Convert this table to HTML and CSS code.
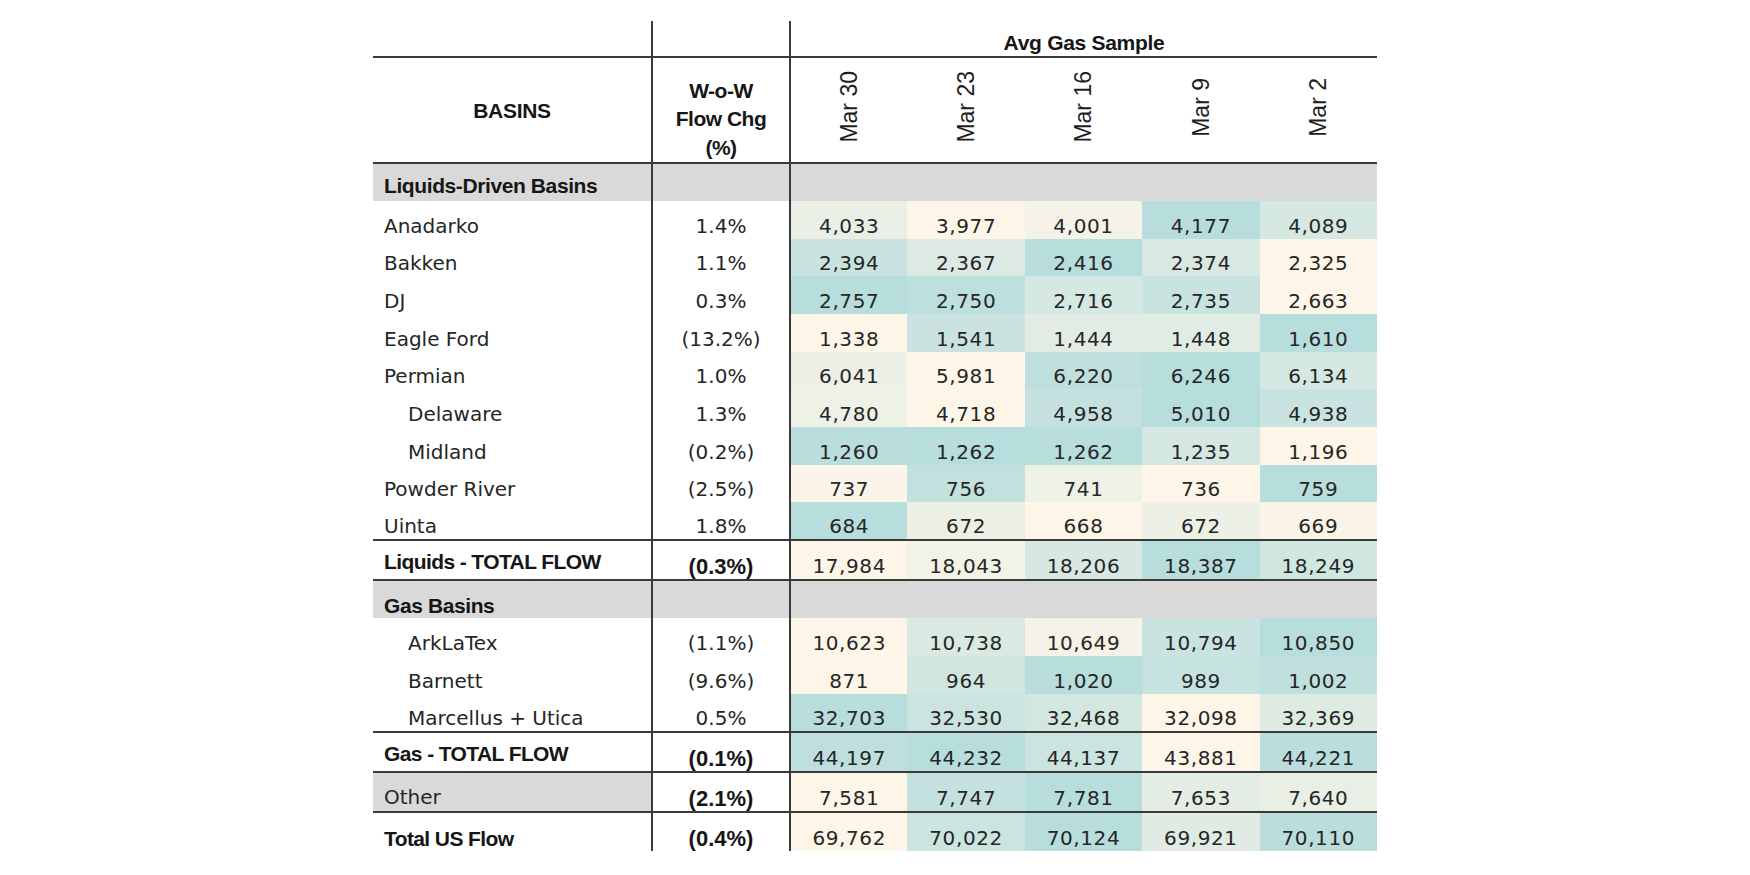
FILE: index.html
```html
<!DOCTYPE html>
<html>
<head>
<meta charset="utf-8">
<title>Avg Gas Sample by Basin</title>
<link rel="stylesheet" href="styles.css">
</head>
<body>
<table class="flow">
  <colgroup>
    <col class="c-name"><col class="c-chg"><col class="c-val"><col class="c-val"><col class="c-val"><col class="c-val"><col class="c-val">
  </colgroup>
  <thead>
    <tr class="r-super rule">
      <th class="name"></th>
      <th class="chg"></th>
      <th class="super" colspan="5">Avg Gas Sample</th>
    </tr>
    <tr class="r-head rule">
      <th class="name head-basins">BASINS</th>
      <th class="chg head-chg">W-o-W<br>Flow Chg<br>(%)</th>
      <th class="date"><span>Mar 30</span></th>
      <th class="date"><span>Mar 23</span></th>
      <th class="date"><span>Mar 16</span></th>
      <th class="date"><span>Mar 9</span></th>
      <th class="date"><span>Mar 2</span></th>
    </tr>
  </thead>
  <tbody>
    <tr class="r-section">
      <td class="name section sec-liq">Liquids-Driven Basins</td>
      <td class="chg"></td>
      <td colspan="5"></td>
    </tr>
    <tr class="r-data heat"><td class="name">Anadarko</td><td class="chg">1.4%</td><td class="v">4,033</td><td class="v">3,977</td><td class="v">4,001</td><td class="v">4,177</td><td class="v">4,089</td></tr>
    <tr class="r-data heat"><td class="name">Bakken</td><td class="chg">1.1%</td><td class="v">2,394</td><td class="v">2,367</td><td class="v">2,416</td><td class="v">2,374</td><td class="v">2,325</td></tr>
    <tr class="r-data heat"><td class="name">DJ</td><td class="chg">0.3%</td><td class="v">2,757</td><td class="v">2,750</td><td class="v">2,716</td><td class="v">2,735</td><td class="v">2,663</td></tr>
    <tr class="r-data heat"><td class="name">Eagle Ford</td><td class="chg">(13.2%)</td><td class="v">1,338</td><td class="v">1,541</td><td class="v">1,444</td><td class="v">1,448</td><td class="v">1,610</td></tr>
    <tr class="r-data heat"><td class="name">Permian</td><td class="chg">1.0%</td><td class="v">6,041</td><td class="v">5,981</td><td class="v">6,220</td><td class="v">6,246</td><td class="v">6,134</td></tr>
    <tr class="r-data heat"><td class="name sub">Delaware</td><td class="chg">1.3%</td><td class="v">4,780</td><td class="v">4,718</td><td class="v">4,958</td><td class="v">5,010</td><td class="v">4,938</td></tr>
    <tr class="r-data heat"><td class="name sub">Midland</td><td class="chg">(0.2%)</td><td class="v">1,260</td><td class="v">1,262</td><td class="v">1,262</td><td class="v">1,235</td><td class="v">1,196</td></tr>
    <tr class="r-data heat"><td class="name">Powder River</td><td class="chg">(2.5%)</td><td class="v">737</td><td class="v">756</td><td class="v">741</td><td class="v">736</td><td class="v">759</td></tr>
    <tr class="r-data heat rule"><td class="name">Uinta</td><td class="chg">1.8%</td><td class="v">684</td><td class="v">672</td><td class="v">668</td><td class="v">672</td><td class="v">669</td></tr>
    <tr class="r-total heat rule"><td class="name total">Liquids - TOTAL FLOW</td><td class="chg strong">(0.3%)</td><td class="v">17,984</td><td class="v">18,043</td><td class="v">18,206</td><td class="v">18,387</td><td class="v">18,249</td></tr>
    <tr class="r-section">
      <td class="name section">Gas Basins</td>
      <td class="chg"></td>
      <td colspan="5"></td>
    </tr>
    <tr class="r-gas heat"><td class="name sub">ArkLaTex</td><td class="chg">(1.1%)</td><td class="v">10,623</td><td class="v">10,738</td><td class="v">10,649</td><td class="v">10,794</td><td class="v">10,850</td></tr>
    <tr class="r-gas heat"><td class="name sub">Barnett</td><td class="chg">(9.6%)</td><td class="v">871</td><td class="v">964</td><td class="v">1,020</td><td class="v">989</td><td class="v">1,002</td></tr>
    <tr class="r-gas heat rule"><td class="name sub">Marcellus + Utica</td><td class="chg">0.5%</td><td class="v">32,703</td><td class="v">32,530</td><td class="v">32,468</td><td class="v">32,098</td><td class="v">32,369</td></tr>
    <tr class="r-total heat rule"><td class="name total">Gas - TOTAL FLOW</td><td class="chg strong">(0.1%)</td><td class="v">44,197</td><td class="v">44,232</td><td class="v">44,137</td><td class="v">43,881</td><td class="v">44,221</td></tr>
    <tr class="r-total heat rule"><td class="name other">Other</td><td class="chg strong">(2.1%)</td><td class="v">7,581</td><td class="v">7,747</td><td class="v">7,781</td><td class="v">7,653</td><td class="v">7,640</td></tr>
    <tr class="r-last heat"><td class="name grand">Total US Flow</td><td class="chg strong">(0.4%)</td><td class="v">69,762</td><td class="v">70,022</td><td class="v">70,124</td><td class="v">69,921</td><td class="v">70,110</td></tr>
  </tbody>
</table>
<script src="script.js"></script>
</body>
</html>
```

FILE: styles.css
```css
html, body {
  margin: 0;
  background: #ffffff;
}

.flow {
  margin: 21px auto 0;
  width: 1004px;
  table-layout: fixed;
  border-collapse: collapse;
  font-family: "DejaVu Sans", sans-serif;
  font-size: 20px;
  color: #262626;
}

.c-name { width: 279px; }
.c-chg { width: 138px; }
.c-val { width: 117.4px; }

.flow th,
.flow td {
  padding: 0;
  line-height: 25px;
  vertical-align: bottom;
  text-align: center;
  font-weight: normal;
  white-space: nowrap;
}

.flow .name,
.flow .chg {
  border-right: 2px solid #3a3a3a;
}

.flow tr.rule > * {
  border-bottom: 2px solid #3a3a3a;
}

/* row heights */
.r-super { height: 36px; }
.r-head { height: 106px; }
.r-section { height: 38px; }
.r-data { height: 37.67px; }
.r-gas { height: 38px; }
.r-total { height: 40px; }
.r-last { height: 39px; }

/* bold family */
.flow .super,
.flow .head-basins,
.flow .head-chg,
.flow .section,
.flow .total,
.flow .grand,
.flow .strong {
  font-family: "Liberation Sans", Arial, sans-serif;
  font-weight: bold;
  color: #161616;
}

.flow .super {
  font-size: 21px;
  letter-spacing: -0.3px;
  padding-bottom: 1px;
}

.flow .head-basins {
  font-size: 21px;
  letter-spacing: -0.3px;
  vertical-align: middle;
}

.flow .head-chg {
  font-size: 21px;
  line-height: 28.5px;
  letter-spacing: -0.5px;
}

.flow .date {
  vertical-align: middle;
}

.date span {
  display: inline-block;
  writing-mode: vertical-rl;
  transform: rotate(180deg);
  font-family: "Liberation Sans", Arial, sans-serif;
  font-size: 23px;
  line-height: 26px;
  color: #1e1e1e;
}

/* body cells */
.flow td.name {
  text-align: left;
  padding-left: 11px;
}

.flow td.sub {
  padding-left: 35px;
}

.flow td.section {
  font-size: 21px;
  letter-spacing: -0.4px;
}

.flow td.sec-liq {
  padding-bottom: 3px;
}

.r-section > td {
  background: #d9d9d9;
}

.flow td.total {
  font-size: 21px;
  letter-spacing: -0.6px;
  padding-bottom: 5px;
}

.flow td.grand {
  font-size: 21px;
  letter-spacing: -0.6px;
}

.flow td.other {
  background: #d9d9d9;
  padding-bottom: 1px;
}

.flow td.strong {
  font-size: 22px;
}

.flow td.v {
  letter-spacing: 0.6px;
}
```

FILE: script.js
```js
(function () {
  var lo = [253, 246, 232];
  var hi = [184, 221, 221];
  var rows = document.querySelectorAll('tr.heat');
  rows.forEach(function (tr) {
    var cells = Array.prototype.slice.call(tr.querySelectorAll('td.v'));
    var vals = cells.map(function (c) {
      return parseFloat(c.textContent.replace(/,/g, ''));
    });
    var min = Math.min.apply(null, vals);
    var max = Math.max.apply(null, vals);
    cells.forEach(function (c, i) {
      var t = max === min ? 0 : (vals[i] - min) / (max - min);
      var rgb = lo.map(function (l, k) {
        return Math.round(l + (hi[k] - l) * t);
      });
      c.style.backgroundColor = 'rgb(' + rgb.join(',') + ')';
    });
  });
})();
```
